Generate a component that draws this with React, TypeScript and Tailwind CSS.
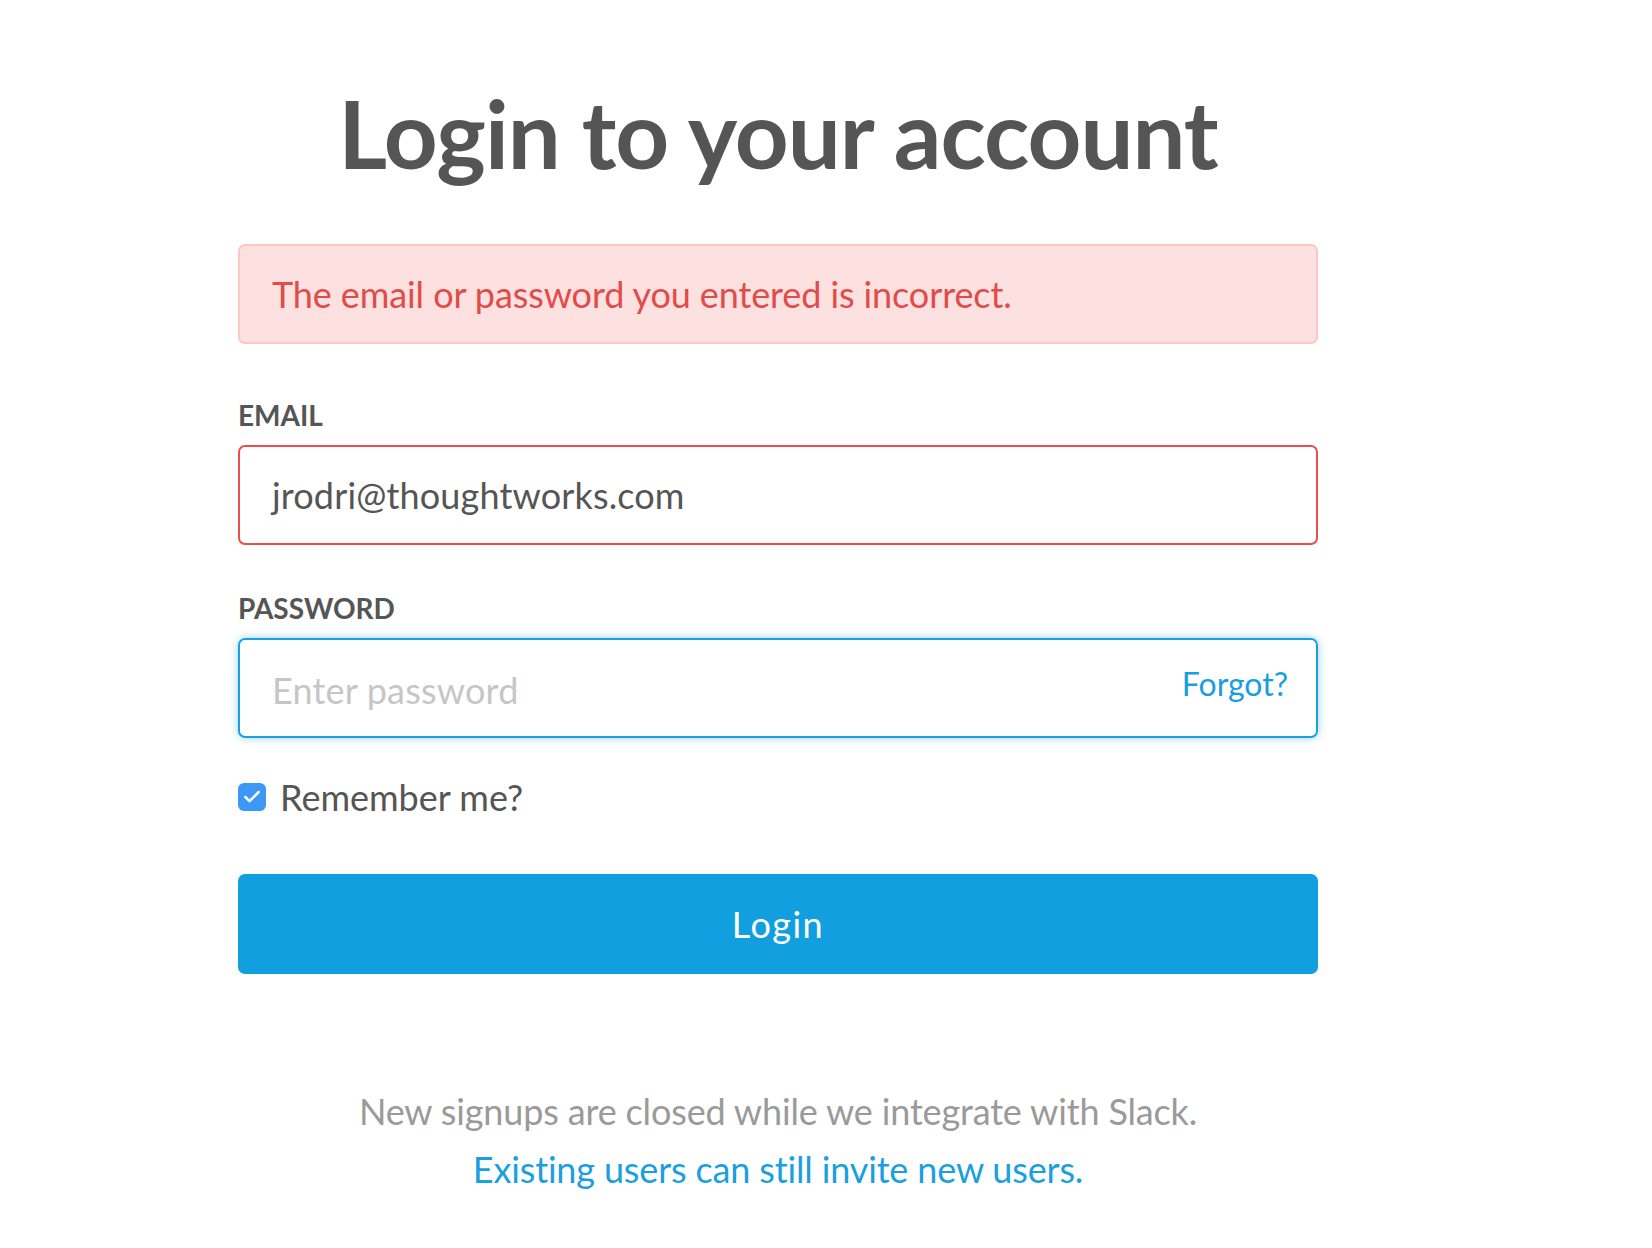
import { Check } from 'lucide-react'

const App = () => {
  return (
    <div className="min-h-[1248px] bg-white font-['Lato','Open_Sans',sans-serif] text-[#555]">
      <div className="ml-[238px] w-[1080px] pt-[86px]">
        {/* Heading */}
        <h1 className="text-center text-[94px] font-bold leading-none tracking-[-1px] text-[#555]">
          Login to your account
        </h1>

        {/* Error */}
        <div className="mt-[64px] flex h-[100px] items-center rounded-[7px] border-2 border-[#fcc6c4] bg-[#fde1e0] pl-[32px]">
          <p className="text-[36px] leading-9 tracking-[-0.1px] text-[#e04c4a]">
            The email or password you entered is incorrect.
          </p>
        </div>

        {/* Email */}
        <label className="mt-[57px] block text-[28px] font-bold leading-7 text-[#555]">
          EMAIL
        </label>
        <div className="mt-[16px] flex h-[100px] items-center rounded-[7px] border-2 border-[#e8504f] pl-[32px]">
          <span className="text-[36px] leading-9 tracking-[0.15px] text-[#555]">jrodri@thoughtworks.com</span>
        </div>

        {/* Password */}
        <label className="mt-[49px] block text-[28px] font-bold leading-7 text-[#555]">
          PASSWORD
        </label>
        <div className="mt-[16px] flex h-[100px] items-center justify-between rounded-[7px] border-2 border-[#1a9fe0] pl-[32px] pr-[28px] shadow-[0_0_8px_rgba(26,159,224,0.45)]">
          <span className="pt-[4px] text-[36px] leading-9 tracking-[0.2px] text-[#c6c6c6]">Enter password</span>
          <a className="pb-[8px] text-[32px] leading-8 text-[#1a9ee0]">Forgot?</a>
        </div>

        {/* Remember */}
        <div className="mt-[41px] flex items-center gap-[14px]">
          <span className="flex h-[28px] w-[28px] items-center justify-center rounded-[6px] bg-[#3d97f7]">
            <Check className="h-[20px] w-[20px] text-white" strokeWidth={3} />
          </span>
          <span className="text-[36px] leading-9 text-[#555]">Remember me?</span>
        </div>

        {/* Button */}
        <button className="mt-[59px] flex h-[100px] w-full items-center justify-center rounded-[7px] bg-[#129fe0] text-[36px] leading-9 tracking-[1.5px] text-white">
          Login
        </button>

        {/* Footer */}
        <div className="mt-[108px] text-center text-[36px] leading-[58px] tracking-[-0.15px]">
          <p className="text-[#9a9a9a]">New signups are closed while we integrate with Slack.</p>
          <a className="text-[#1a9fe0]">Existing users can still invite new users.</a>
        </div>
      </div>
    </div>
  )
}

export default App
